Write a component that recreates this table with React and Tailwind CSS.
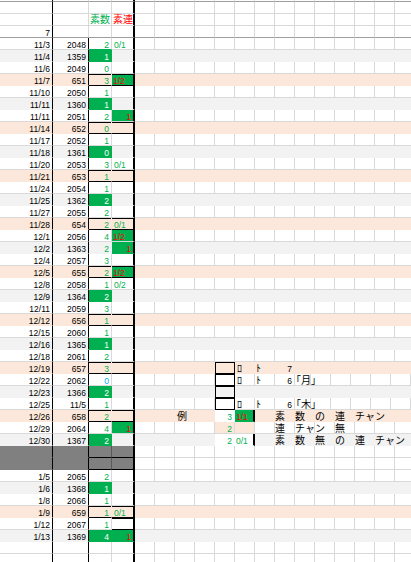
import { twMerge } from 'tailwind-merge';

const COLW = [
    'w-[53px]', 'w-[36px]', 'w-[23px]', 'w-[23px]',
    'w-[20px]', 'w-[20px]', 'w-[20px]', 'w-[20px]', 'w-[20px]', 'w-[20px]', 'w-[20px]',
    'w-[20px]', 'w-[20px]', 'w-[20px]', 'w-[20px]', 'w-[20px]', 'w-[20px]', 'w-[20px]',
];

const FILL = { w: '', g: 'bg-[#f2f2f2]', p: 'bg-[#fce8da]' };

const NUM = "font-['Liberation_Sans',sans-serif] text-[8.5px]";
const JP = "font-['Noto_Sans_CJK_JP',sans-serif] text-[10px]";

// date, number, 素数, style of 素数, 素連, style of 素連
// style: t = green text, g = green cell, b = blue text, r = red on green
const DATA = [
    ['11/3', '2048', '2', 't', '0/1', 't'],
    ['11/4', '1359', '1', 'g'],
    ['11/6', '2049', '0', 't'],
    ['11/7', '651', '3', 't', '1/2', 'r'],
    ['11/10', '2050', '1', 't'],
    ['11/11', '1360', '1', 'g'],
    ['11/11', '2051', '2', 't', '1', 'rn'],
    ['11/14', '652', '0', 't'],
    ['11/17', '2052', '1', 't'],
    ['11/18', '1361', '0', 'g'],
    ['11/20', '2053', '3', 't', '0/1', 't'],
    ['11/21', '653', '1', 't'],
    ['11/24', '2054', '1', 't'],
    ['11/25', '1362', '2', 'g'],
    ['11/27', '2055', '2', 't'],
    ['11/28', '654', '2', 't', '0/1', 't'],
    ['12/1', '2056', '4', 't', '1/2', 'r'],
    ['12/2', '1363', '2', 't', '1', 'rn'],
    ['12/4', '2057', '3', 't'],
    ['12/5', '655', '2', 't', '1/2', 'r'],
    ['12/8', '2058', '1', 't', '0/2', 't'],
    ['12/9', '1364', '2', 'g'],
    ['12/11', '2059', '3', 't'],
    ['12/12', '656', '1', 't'],
    ['12/15', '2060', '1', 't'],
    ['12/16', '1365', '1', 'g'],
    ['12/18', '2061', '2', 't'],
    ['12/19', '657', '3', 't'],
    ['12/22', '2062', '0', 'b'],
    ['12/23', '1366', '2', 'g'],
    ['12/25', '11/5', '1', 't'],
    ['12/26', '658', '2', 't'],
    ['12/29', '2064', '4', 't', '1', 'rn'],
    ['12/30', '1367', '2', 'g'],
    'block',
    'block',
    ['1/5', '2065', '2', 't'],
    ['1/6', '1368', '1', 'g'],
    ['1/8', '2066', '1', 't'],
    ['1/9', '659', '1', 't', '0/1', 't'],
    ['1/12', '2067', '1', 't', '', 'box'],
    ['1/13', '1369', '4', 'g', '1', 'rn'],
    'empty',
    'empty',
];

const BOX = { cls: 'border border-black' };
const RO = { text: 'ﾛ', jp: true, cls: 'pl-[2px]' };
const TO = { text: 'ﾄ', jp: true, cls: 'pl-[1px]' };

// notes on the right side, keyed by row index then column index
const NOTES = {
    27: { 8: BOX, 9: RO, 10: TO, 11: { text: '7', right: true } },
    28: { 8: BOX, 9: RO, 10: TO, 11: { text: '6', right: true }, 12: { text: '「月」', jp: true, cls: '-ml-[4px]' } },
    29: { 8: BOX },
    30: { 8: BOX, 9: RO, 10: TO, 11: { text: '6', right: true }, 12: { text: '「木」', jp: true, cls: '-ml-[4px]' } },
    31: {
        6: { text: '例', jp: true, cls: 'pl-[2px]' },
        8: { text: '3', right: true, cls: 'bg-white text-[#00b050]' },
        9: { text: '1/1', cls: 'bg-[#00b050] text-[#ff0000] pl-[1px] border-r-2 border-r-black' },
        11: { text: '素　数　の　連　チャン', jp: true },
    },
    32: {
        8: { text: '2', right: true, cls: 'bg-[#fce8da] text-[#00b050]' },
        9: { cls: 'bg-[#fce8da]' },
        11: { text: '連　チャン　無', jp: true },
    },
    33: {
        8: { text: '2', right: true, cls: 'bg-white text-[#00b050]' },
        9: { text: '0/1', cls: 'bg-white text-[#00b050] pl-[1px] border-r-2 border-r-black' },
        11: { text: '素　数　無　の　連　チャン', jp: true },
    },
};

function Cell({ col, filled, data, right, jp, className = '', children }) {
    let rightBorder;
    if (col === 0) rightBorder = 'border-r border-r-black';
    else if (col === 3) rightBorder = 'border-r-2 border-r-black';
    else if (col === 1 && data) rightBorder = 'border-r border-r-black';
    else rightBorder = filled ? 'border-r border-r-transparent' : 'border-r border-r-[#d9d9d9]';
    const bottom = filled ? 'border-b border-b-transparent' : 'border-b border-b-[#d9d9d9]';

    return (
        <div
            className={twMerge(
                'flex h-[12px] shrink-0 items-end whitespace-nowrap',
                COLW[col],
                rightBorder,
                bottom,
                right ? 'justify-end pr-[2px]' : 'justify-start',
                jp ? `${JP} leading-[10px] pb-[0px]` : `${NUM} leading-[8px] pb-[0.5px]`,
                className
            )}
        >
            {children}
        </div>
    );
}

function DataRow({ row, index }) {
    const fill = ['w', 'g', 'w', 'p'][index % 4];
    const filled = fill !== 'w';
    const [date, num, c, cs, d, ds] = row;
    const boxed = fill === 'p';
    const notes = NOTES[index] || {};

    let cCls = 'text-[#00b050]';
    if (cs === 'g') cCls = 'bg-[#00b050] text-white';
    if (cs === 'b') cCls = 'text-[#00b0f0]';
    if (index === 0) cCls += ' border-b-[#00b050]';
    if (boxed) cCls += ' border-b-black shadow-[inset_0_1px_0_#000]';

    let dCls = '';
    if (ds === 't') dCls = 'text-[#00b050] pl-[2px]';
    if (ds === 'r') dCls = 'bg-[#00b050] text-[#ff0000] pl-[1px]';
    if (ds === 'rn') dCls = 'bg-[#00b050] text-[#ff0000]';
    if (ds === 'box') dCls = 'border-b-black shadow-[inset_0_1px_0_#000]';
    if (boxed) dCls += ' border-b-black shadow-[inset_0_1px_0_#000]';

    return (
        <div className={`flex ${FILL[fill]}`}>
            <Cell col={0} filled={filled} data right>{date}</Cell>
            <Cell col={1} filled={filled} data right>{num}</Cell>
            <Cell col={2} filled={filled} data right className={cCls}>{c}</Cell>
            <Cell col={3} filled={filled} data right={ds === 'rn'} className={dCls}>{d}</Cell>
            {COLW.slice(4).map((_, k) => {
                const col = k + 4;
                const n = notes[col];
                return (
                    <Cell key={col} col={col} filled={filled} right={n?.right} jp={n?.jp} className={n?.cls}>
                        {n?.text}
                    </Cell>
                );
            })}
        </div>
    );
}

function BlockRow() {
    return (
        <div className="flex">
            <Cell col={0} filled className="bg-[#808080]" />
            <Cell col={1} filled data className="bg-[#808080]" />
            <Cell col={2} filled className="bg-[#808080] border-b-black border-r-[#5a5a5a]" />
            <Cell col={3} filled className="bg-[#808080] border-b-black" />
            {COLW.slice(4).map((_, k) => <Cell key={k} col={k + 4} />)}
        </div>
    );
}

function PlainRow({ data, cells = {}, className = '' }) {
    return (
        <div className="flex">
            {COLW.map((_, col) => (
                <Cell key={col} col={col} data={data} right={cells[col]?.right} jp={cells[col]?.jp} className={twMerge(className, cells[col]?.cls)}>
                    {cells[col]?.text}
                </Cell>
            ))}
        </div>
    );
}

export default function App() {
    return (
        <div className="w-[411px] h-[562px] overflow-hidden bg-white text-black">
            <div className="flex">
                {COLW.map((w, col) => (
                    <div
                        key={col}
                        className={twMerge(
                            'h-[2px] shrink-0 border-b border-b-[#9e9e9e] border-r border-r-[#d9d9d9]',
                            w,
                            col === 0 && 'border-r-black',
                            col === 3 && 'border-r-2 border-r-black'
                        )}
                    />
                ))}
            </div>
            <PlainRow />
            <PlainRow
                cells={{
                    2: { text: '素数', jp: true, cls: 'text-[#00b050] pl-[1px] pb-[1.5px]' },
                    3: { text: '素連', jp: true, cls: 'text-[#ff0000] pl-[1px] pb-[1.5px]' },
                }}
            />
            <PlainRow className="border-b-[#9e9e9e]" cells={{ 0: { text: '7', right: true } }} />
            {DATA.map((row, i) => {
                if (row === 'block') return <BlockRow key={i} />;
                if (row === 'empty') return <PlainRow key={i} data />;
                return <DataRow key={i} row={row} index={i} />;
            })}
        </div>
    );
}
